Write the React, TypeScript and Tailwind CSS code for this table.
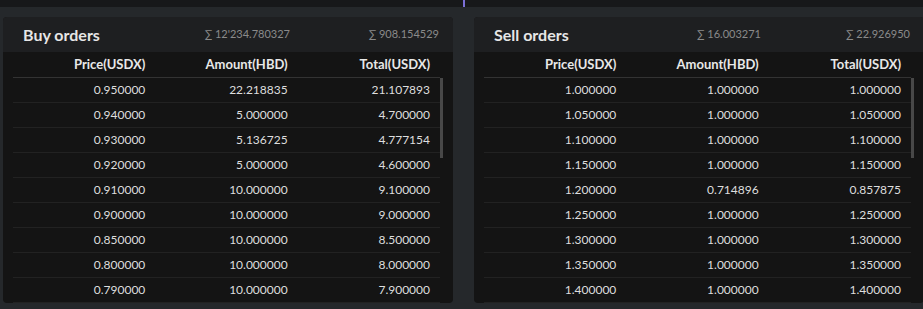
const BUY = [
  ['0.950000', '22.218835', '21.107893'],
  ['0.940000', '5.000000', '4.700000'],
  ['0.930000', '5.136725', '4.777154'],
  ['0.920000', '5.000000', '4.600000'],
  ['0.910000', '10.000000', '9.100000'],
  ['0.900000', '10.000000', '9.000000'],
  ['0.850000', '10.000000', '8.500000'],
  ['0.800000', '10.000000', '8.000000'],
  ['0.790000', '10.000000', '7.900000'],
]

const SELL = [
  ['1.000000', '1.000000', '1.000000'],
  ['1.050000', '1.000000', '1.050000'],
  ['1.100000', '1.000000', '1.100000'],
  ['1.150000', '1.000000', '1.150000'],
  ['1.200000', '0.714896', '0.857875'],
  ['1.250000', '1.000000', '1.250000'],
  ['1.300000', '1.000000', '1.300000'],
  ['1.350000', '1.000000', '1.350000'],
  ['1.400000', '1.000000', '1.400000'],
]

interface OrderPanelProps {
  title: string
  sumAmount: string
  sumTotal: string
  rows: string[][]
}

function OrderPanel({ title, sumAmount, sumTotal, rows }: OrderPanelProps) {
  return (
    <div className="flex flex-col w-[450px] h-[286px] rounded-[4px] overflow-hidden bg-[#141414] shrink-0">
      {/* header */}
      <div className="flex items-center h-[35px] bg-[#1e1f21] pl-[20px] pr-[14px]">
        <span className="w-[146px] text-[16px] font-bold text-[#e6e6e6]">{title}</span>
        <span className="w-[121px] text-right text-[11px] text-[#8a8a8a]">∑ {sumAmount}</span>
        <span className="flex-1 text-right text-[11px] text-[#8a8a8a]">∑ {sumTotal}</span>
      </div>

      {/* table */}
      <div className="relative flex flex-col px-[10px] pr-[13px]">
        <div className="grid grid-cols-3 h-[26px] items-center border-b border-[#333] text-[13px] font-bold text-[#e8e8e8]">
          <span className="text-right pr-[10px]">Price(USDX)</span>
          <span className="text-right pr-[10px]">Amount(HBD)</span>
          <span className="text-right pr-[10px]">Total(USDX)</span>
        </div>
        {rows.map((r, i) => (
          <div
            key={i}
            className="grid grid-cols-3 h-[25px] items-center border-b border-[#222] text-[12px] text-[#dedede]"
          >
            <span className="text-right pr-[10px]">{r[0]}</span>
            <span className="text-right pr-[10px]">{r[1]}</span>
            <span className="text-right pr-[10px]">{r[2]}</span>
          </div>
        ))}
        {/* scroll thumb */}
        <div className="absolute right-[10px] top-[26px] w-[3px] h-[80px] bg-[#484848]" />
      </div>
    </div>
  )
}

export default function App() {
  return (
    <div className="w-[923px] h-[309px] overflow-hidden bg-[#25282b]" style={{ fontFamily: 'Lato, "Open Sans", sans-serif' }}>
      <div className="relative h-[7px] bg-[#17181a]">
        <div className="absolute left-[463px] top-0 w-[2px] h-[7px] bg-[#7b6fd6]" />
      </div>
      <div className="flex gap-[21px] pl-[3px] pt-[10px]">
        <OrderPanel title="Buy orders" sumAmount="12'234.780327" sumTotal="908.154529" rows={BUY} />
        <OrderPanel title="Sell orders" sumAmount="16.003271" sumTotal="22.926950" rows={SELL} />
      </div>
    </div>
  )
}
